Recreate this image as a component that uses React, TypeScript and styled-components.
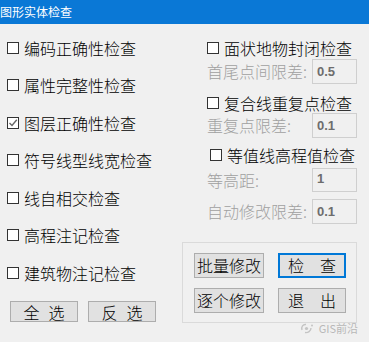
import React from "react";
import styled, { createGlobalStyle } from "styled-components";

const Global = createGlobalStyle`
  html, body { margin: 0; padding: 0; background: #f0f0f0; }
  body { font-family: "Noto Sans CJK SC", "Noto Sans", sans-serif; }
`;

const Window = styled.div`
  position: relative;
  width: 369px;
  height: 342px;
  background: #f0f0f0;
  overflow: hidden;
  display: flex;
  flex-direction: column;
`;

const TitleBar = styled.div`
  height: 24px;
  background: #0a78d6;
  color: #fff;
  font-size: 12px;
  line-height: 24px;
  white-space: nowrap;
  flex: none;
`;

const Body = styled.div`
  display: grid;
  grid-template-columns: 182px 175px;
  align-items: start;
`;

const LeftCol = styled.div`
  display: flex;
  flex-direction: column;
  gap: 15.5px;
  padding: 12.5px 0 0 7px;
`;

const CheckRow = styled.div<{ $mt?: number; $indent?: number }>`
  display: flex;
  align-items: center;
  gap: 5px;
  height: 22px;
  margin-top: ${(p) => p.$mt ?? 0}px;
  padding-left: ${(p) => p.$indent ?? 0}px;
  font-size: 16px;
  font-weight: 300;
  line-height: 22px;
  color: #000;
  white-space: nowrap;
`;

const Box = styled.span`
  flex: none;
  width: 12px;
  height: 12px;
  box-sizing: border-box;
  border: 1px solid #333;
  background: #fff;
  display: flex;
  align-items: center;
  justify-content: center;
`;

const ButtonRow = styled.div`
  display: flex;
  gap: 10px;
  margin-top: 2px;
  padding-left: 3px;
`;

const Button = styled.div<{ $w: number; $h: number; $gap?: number; $default?: boolean }>`
  width: ${(p) => p.$w}px;
  height: ${(p) => p.$h}px;
  box-sizing: border-box;
  background: #e1e1e1;
  border: ${(p) => (p.$default ? "2px solid #0078d7" : "1px solid #adadad")};
  display: flex;
  align-items: center;
  justify-content: center;
  gap: ${(p) => p.$gap ?? 0}px;
  font-size: 16px;
  font-weight: 300;
  line-height: 1;
  color: #000;
  white-space: nowrap;
`;

const RightCol = styled.div`
  display: flex;
  flex-direction: column;
  padding-top: 12.5px;
`;

const Section = styled.div`
  display: flex;
  flex-direction: column;
  padding-left: 25px;
`;

const FieldRow = styled.div<{ $mt?: number }>`
  display: flex;
  align-items: center;
  margin-top: ${(p) => p.$mt ?? 0}px;
`;

const Label = styled.span`
  width: 105px;
  flex: none;
  font-size: 16px;
  font-weight: 300;
  line-height: 20px;
  color: #a0a0a0;
  white-space: nowrap;
`;

const Input = styled.div<{ $h: number; $top?: boolean }>`
  width: 45px;
  height: ${(p) => p.$h}px;
  box-sizing: border-box;
  border: 1px solid #cfcfcf;
  background: #f0f0f0;
  display: flex;
  align-items: ${(p) => (p.$top ? "flex-start" : "center")};
  padding: ${(p) => (p.$top ? "2px 0 0 4px" : "0 0 0 4px")};
  font-family: "Liberation Sans", Arial, sans-serif;
  font-weight: bold;
  font-size: 13px;
  line-height: 15px;
  color: #6d6d6d;
`;

const GroupBox = styled.div`
  margin-top: 18px;
  height: 81px;
  box-sizing: border-box;
  border: 1px solid #dadada;
  display: grid;
  grid-template-columns: 70px 68px;
  grid-auto-rows: 25px;
  column-gap: 14px;
  row-gap: 10px;
  padding: 10px 0 0 11px;
`;

const Watermark = styled.div`
  position: absolute;
  right: 11px;
  bottom: 8px;
  display: flex;
  align-items: center;
  gap: 5px;
  font-family: "Noto Sans CJK SC", sans-serif;
  font-size: 11px;
  line-height: 12px;
  color: #b8b8b8;
`;

const Check = () => (
  <svg width="10" height="10" viewBox="0 0 10 10">
    <path d="M1.5 5 L4 7.5 L8.8 1.8" fill="none" stroke="#666" strokeWidth="1.4" />
  </svg>
);

const CB: React.FC<{ label: string; checked?: boolean; mt?: number; indent?: number }> = ({
  label,
  checked,
  mt,
  indent,
}) => (
  <CheckRow $mt={mt} $indent={indent}>
    <Box>{checked && <Check />}</Box>
    <span>{label}</span>
  </CheckRow>
);

export default function App() {
  return (
    <>
      <Global />
      <Window>
        <TitleBar>图形实体检查</TitleBar>
        <Body>
          <LeftCol>
            <CB label="编码正确性检查" />
            <CB label="属性完整性检查" />
            <CB label="图层正确性检查" checked />
            <CB label="符号线型线宽检查" />
            <CB label="线自相交检查" />
            <CB label="高程注记检查" />
            <CB label="建筑物注记检查" />
            <ButtonRow>
              <Button $w={68} $h={21} $gap={9}>
                <span>全</span>
                <span>选</span>
              </Button>
              <Button $w={68} $h={21} $gap={9}>
                <span>反</span>
                <span>选</span>
              </Button>
            </ButtonRow>
          </LeftCol>
          <RightCol>
            <Section>
              <CB label="面状地物封闭检查" />
              <FieldRow>
                <Label>首尾点间限差:</Label>
                <Input $h={25}>0.5</Input>
              </FieldRow>
              <CB label="复合线重复点检查" mt={8} />
              <FieldRow $mt={-1}>
                <Label>重复点限差:</Label>
                <Input $h={25}>0.1</Input>
              </FieldRow>
              <CB label="等值线高程值检查" mt={6} indent={3} />
              <FieldRow $mt={2}>
                <Label>等高距:</Label>
                <Input $h={24} $top>
                  1
                </Input>
              </FieldRow>
              <FieldRow $mt={7}>
                <Label>自动修改限差:</Label>
                <Input $h={25}>0.1</Input>
              </FieldRow>
            </Section>
            <GroupBox>
              <Button $w={70} $h={25}>
                批量修改
              </Button>
              <Button $w={68} $h={25} $gap={16} $default>
                <span>检</span>
                <span>查</span>
              </Button>
              <Button $w={70} $h={25}>
                逐个修改
              </Button>
              <Button $w={68} $h={25} $gap={16}>
                <span>退</span>
                <span>出</span>
              </Button>
            </GroupBox>
          </RightCol>
        </Body>
        <Watermark>
          <svg width="14" height="11" viewBox="0 0 14 11">
            <path d="M2 7 C1 4 3 1 6 1.5" fill="none" stroke="#c4c4c4" strokeWidth="1.4" />
            <path d="M5 9.5 C8 10 11 8 11 5" fill="none" stroke="#c4c4c4" strokeWidth="1.4" />
            <circle cx="6.5" cy="5.5" r="1.6" fill="#c4c4c4" />
            <circle cx="12" cy="2.5" r="1" fill="#c4c4c4" />
          </svg>
          <span>GIS前沿</span>
        </Watermark>
      </Window>
    </>
  );
}
